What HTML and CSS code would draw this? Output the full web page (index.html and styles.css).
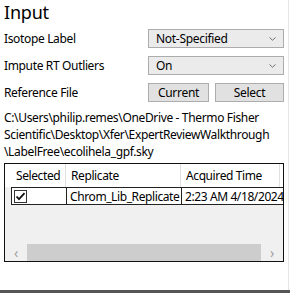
FILE: index.html
```html
<!DOCTYPE html>
<html>
<head>
<meta charset="utf-8">
<link rel="stylesheet" href="styles.css">
</head>
<body>
<div class="page">
  <h1 class="title">Input</h1>
  <div class="form">
    <div class="label">Isotope Label</div>
    <div class="combo"><span>Not-Specified</span><svg class="chev" width="7" height="4" viewBox="0 0 7 4"><path d="M0.5 0.5 L3.5 3.2 L6.5 0.5" fill="none" stroke="#707070" stroke-width="1"/></svg></div>
    <div class="label">Impute RT Outliers</div>
    <div class="combo"><span>On</span><svg class="chev" width="7" height="4" viewBox="0 0 7 4"><path d="M0.5 0.5 L3.5 3.2 L6.5 0.5" fill="none" stroke="#707070" stroke-width="1"/></svg></div>
    <div class="label">Reference File</div>
    <div class="buttons"><div class="btn btn-current">Current</div><div class="btn btn-select">Select</div></div>
  </div>
  <div class="path">C:\Users\philip.remes\OneDrive - Thermo Fisher Scientific\Desktop\Xfer\ExpertReviewWalkthrough \LabelFree\ecolihela_gpf.sky</div>
  <div class="grid">
    <div class="head">
      <div class="rowhead"></div>
      <div class="hcell">Selected</div>
      <div class="hcell">Replicate</div>
      <div class="hcell">Acquired Time</div>
    </div>
    <div class="row">
      <div class="rowhead"></div>
      <div class="cell cb"><svg width="13" height="13" viewBox="0 0 13 13"><rect x="0.5" y="0.5" width="12" height="12" fill="#fff" stroke="#333"/><path d="M2.5 6.5 L5 9.2 L10.5 3.2" fill="none" stroke="#111" stroke-width="1.8"/></svg></div>
      <div class="cell">Chrom_Lib_Replicate</div>
      <div class="cell last">2:23 AM 4/18/2024</div>
    </div>
    <div class="empty"></div>
    <div class="scroll">
      <div class="arrow">&#8249;</div>
      <div class="thumb"></div>
      <div class="arrow">&#8250;</div>
    </div>
  </div>
</div>
<div class="bottom"></div>
</body>
</html>
```
FILE: styles.css
```css
html, body {
  margin: 0;
  padding: 0;
  background: #fff;
  width: 290px;
  height: 293px;
  overflow: hidden;
  font-family: "Noto Sans", "Open Sans", sans-serif;
  color: #000;
}
.page {
  height: 290px;
  padding-left: 4px;
  border-right: 1px solid #e6e6e6;
  box-sizing: border-box;
  width: 289px;
}
.title {
  margin: 0;
  font-weight: normal;
  font-size: 18px;
  line-height: 24px;
  height: 28px;
  letter-spacing: -0.2px;
}
.form {
  display: grid;
  grid-template-columns: 144px 136px;
  grid-auto-rows: 19px;
  row-gap: 8px;
  align-items: center;
  margin-top: 1px;
}
.label {
  font-size: 12px;
  letter-spacing: -0.35px;
}
.combo {
  height: 19px;
  box-sizing: border-box;
  border: 1px solid #acacac;
  background: #ebebeb;
  display: flex;
  align-items: center;
  justify-content: space-between;
  padding: 0 7px 0 7px;
  font-size: 12px;
  letter-spacing: -0.3px;
}
.chev { margin-top: 1px; }
.buttons {
  display: flex;
  gap: 6px;
  height: 19px;
}
.btn {
  box-sizing: border-box;
  height: 19px;
  border: 1px solid #adadad;
  background: #e1e1e1;
  font-size: 12px;
  letter-spacing: -0.3px;
  display: flex;
  align-items: center;
  justify-content: center;
}
.btn-current { width: 61px; }
.btn-select { width: 69px; }
.path {
  margin-top: 7px;
  font-size: 12px;
  line-height: 17px;
  letter-spacing: -0.35px;
  width: 284px;
  height: 54px;
}
.grid {
  width: 280px;
  height: 99px;
  box-sizing: border-box;
  border: 1px solid #111;
  background: #f0f0f0;
  display: flex;
  flex-direction: column;
  overflow: hidden;
  font-size: 12px;
  letter-spacing: -0.4px;
}
.head, .row {
  display: grid;
  grid-template-columns: 6px 55px 115px 99px;
  flex: none;
  white-space: nowrap;
}
.head {
  height: 23px;
  background: #fff;
}
.hcell {
  box-sizing: border-box;
  height: 23px;
  display: flex;
  align-items: center;
  padding-left: 5px;
  border-right: 1px solid #e0e0e0;
}
.row {
  height: 18px;
  background: #fff;
  grid-template-columns: 6px 55px 115px 120px;
}
.row .rowhead { background: #f0f0f0; }
.cell {
  box-sizing: border-box;
  height: 18px;
  border-top: 1px solid #222;
  border-bottom: 1px solid #222;
  border-left: 1px solid #222;
  display: flex;
  align-items: center;
  padding-left: 3px;
  overflow: hidden;
}
.cell.cb { padding-left: 2px; }
.empty { flex: 1; }
.scroll {
  height: 17px;
  display: flex;
  align-items: center;
  flex: none;
}
.arrow {
  width: 22px;
  text-align: center;
  color: #a0a0a0;
  font-size: 14px;
  line-height: 17px;
}
.thumb {
  flex: 1;
  height: 17px;
  background: #cdcdcd;
}
.bottom {
  height: 3px;
  background: #555;
}
```
